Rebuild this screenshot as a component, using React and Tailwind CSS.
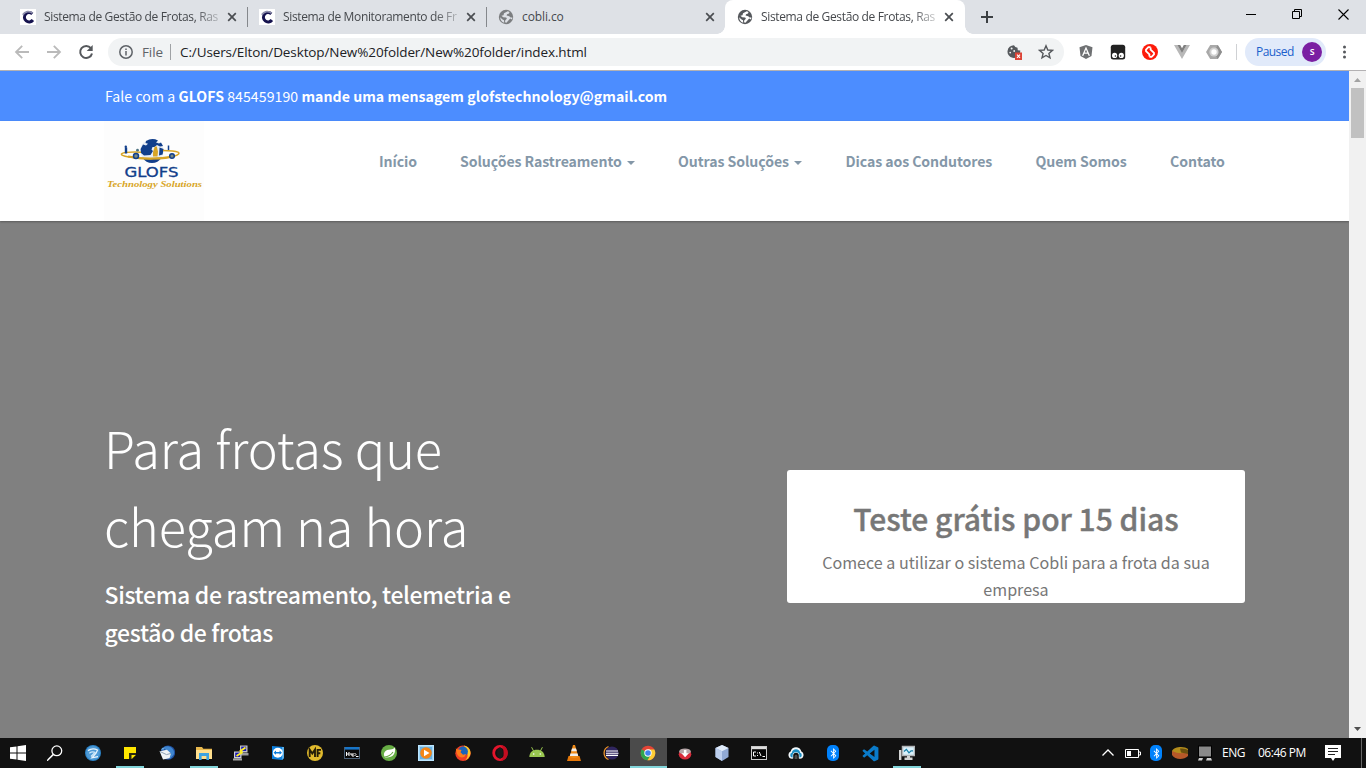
import React from "react";
import { FaAngular, FaBluetoothB } from "react-icons/fa";
import { BiLogoVisualStudio } from "react-icons/bi";

const Svg = ({ s = 16, className = "", children, box = 16 }) => (
  <svg width={s} height={s} viewBox={`0 0 ${box} ${box}`} fill="none" className={`shrink-0 ${className}`}>
    {children}
  </svg>
);

const CobliIcon = () => (
  <Svg>
    <rect width="16" height="16" fill="#fff" />
    <path d="M12.3 4.8A4.7 4.7 0 1 0 12.9 11" stroke="#16134f" strokeWidth="3" />
    <path d="M2.8 5.8C5 2.3 9.5 1.6 12.5 4" stroke="#8f90ad" strokeWidth="1.8" />
  </Svg>
);

const GlobeIcon = ({ color, bg }) => (
  <Svg>
    <circle cx="8" cy="8" r="7.2" fill={color} />
    <path d="M9.8 2.3 11.5 3.1 11 4.6 9 5.2 8.6 6.4 11.2 7.2 12.6 8.6H14.4L14 10.4 12.2 9.4 10.6 11.2 8.4 13.8 7 13.2 7.3 11.2 8.9 9.8 8.2 8.6 5.2 8.3 3.4 6.8 5.5 6.2 6 4.2Z" fill={bg} />
    <path d="M2.2 8.2 4.2 10.2 6 11.2 6.2 13.8Q2.4 12.6 2.2 8.2Z" fill={bg} />
  </Svg>
);

const CloseX = () => (
  <Svg s={10} box={10} className="text-[#4a4d51]">
    <path d="M1.2 1.2 8.8 8.8M8.8 1.2 1.2 8.8" stroke="currentColor" strokeWidth="1.7" />
  </Svg>
);

const tabs = [
  { title: "Sistema de Gestão de Frotas, Ras", icon: <CobliIcon />, fade: true },
  { title: "Sistema de Monitoramento de Fr", icon: <CobliIcon />, fade: true },
  { title: "cobli.co", icon: <GlobeIcon color="#7c7e80" bg="#dee1e6" /> },
  { title: "Sistema de Gestão de Frotas, Ras", icon: <GlobeIcon color="#55585c" bg="#fff" />, active: true, fade: true },
];

function TabStrip() {
  return (
    <div className="flex h-[34px] shrink-0 bg-[#dee1e6] pl-[8px]">
      {tabs.map((t, i) => (
        <div
          key={i}
          className={`relative flex h-[34px] shrink-0 items-center pr-[10px] pl-[12px] ${t.active ? "w-[240px] rounded-t-lg bg-white" : "w-[239px]"}`}
        >
          {t.icon}
          <span
            className={`ml-[8px] w-[175px] font-['Open_Sans','Noto_Sans',sans-serif] text-[12px] whitespace-nowrap text-[#45484c] ${t.fade ? "tracking-[-0.35px] [mask-image:linear-gradient(to_right,#000_86%,rgba(0,0,0,0.25)_100%)]" : "tracking-[-0.1px]"}`}
          >
            {t.title}
          </span>
          <span className="ml-[8px] flex">
            <CloseX />
          </span>
          {i < 2 && <span className="absolute top-[7px] -right-px h-[20px] w-px bg-[#85888c]" />}
          {t.active && (
            <>
              <span className="absolute bottom-0 -left-[8px] h-[8px] w-[8px] bg-[radial-gradient(circle_at_0_0,#dee1e6_7.5px,#fff_8px)]" />
              <span className="absolute -right-[8px] bottom-0 h-[8px] w-[8px] bg-[radial-gradient(circle_at_100%_0,#dee1e6_7.5px,#fff_8px)]" />
            </>
          )}
        </div>
      ))}
      <div className="ml-[15px] flex items-center">
        <Svg s={14} box={14}>
          <path d="M7 1V13M1 7H13" stroke="#3c4043" strokeWidth="2" />
        </Svg>
      </div>
      <div className="ml-auto flex h-[28px] items-center">
        <span className="flex w-[46px] justify-center">
          <Svg s={10} box={10}>
            <path d="M0 5.5H10" stroke="#000" />
          </Svg>
        </span>
        <span className="flex w-[46px] justify-center">
          <Svg s={10} box={10}>
            <path d="M.5 2.5H7.5V9.5H.5ZM2.5 2.5V.5H9.5V7.5H7.5" stroke="#000" />
          </Svg>
        </span>
        <span className="flex w-[46px] justify-center">
          <Svg s={11} box={11}>
            <path d="M.5.5 10.5 10.5M10.5.5.5 10.5" stroke="#000" strokeWidth="1.1" />
          </Svg>
        </span>
      </div>
    </div>
  );
}

function Toolbar() {
  return (
    <div className="flex h-[37px] shrink-0 items-center border-b border-[#b3b1b3] bg-white pl-[14px] font-['Open_Sans','Noto_Sans',sans-serif]">
      <Svg>
        <path d="M15 8H2M8.2 1.8 2 8 8.2 14.2" stroke="#bababa" strokeWidth="1.8" />
      </Svg>
      <Svg className="ml-[16px]">
        <path d="M1 8H14M7.8 1.8 14 8 7.8 14.2" stroke="#bababa" strokeWidth="1.8" />
      </Svg>
      <Svg className="ml-[16px]">
        <path d="M12.9 4.2A6 6 0 1 0 14 9.4" stroke="#55585c" strokeWidth="2" />
        <path d="M14.7 1V7H8.7Z" fill="#55585c" />
      </Svg>
      <div className="ml-[14px] flex h-[28px] w-[956px] items-center rounded-full bg-[#f1f3f4] pl-[11px]">
        <Svg s={14} box={14}>
          <circle cx="7" cy="7" r="6.2" stroke="#5f6368" strokeWidth="1.5" />
          <path d="M7 6V10.5M7 3.4V5" stroke="#5f6368" strokeWidth="1.5" />
        </Svg>
        <span className="ml-[9px] w-[28px] pt-px text-[13.5px] tracking-[-0.1px] text-[#5f6368]">File</span>
        <span className="h-[16px] w-px bg-[#9fa2a5]" />
        <span className="ml-[9px] pt-px text-[13.5px] tracking-[-0.11px] whitespace-nowrap text-[#202124]">
          C:/Users/Elton/Desktop/New%20folder/New%20folder/index.html
        </span>
        <Svg className="mr-px ml-auto">
          <path d="M8 1.2A6.4 6.4 0 1 0 14 9.5L14.3 6.5 11.8 6.2 11.5 3.8 9.3 3Z" fill="#55585c" />
          <circle cx="5.6" cy="4.6" r="1" fill="#f1f3f4" />
          <circle cx="8.2" cy="7" r=".9" fill="#f1f3f4" />
          <circle cx="4.2" cy="8.6" r=".9" fill="#f1f3f4" />
          <rect x="9" y="8.5" width="7" height="7.5" fill="#dc4437" />
          <path d="M11 10.7 14 13.8M14 10.7 11 13.8" stroke="#fff" strokeWidth="1.1" />
        </Svg>
        <Svg className="mr-[10px] ml-[15px]">
          <path d="M8 1.8 9.8 6 14.4 6.4 10.9 9.4 12 13.9 8 11.5 4 13.9 5.1 9.4 1.6 6.4 6.2 6Z" stroke="#55585c" strokeWidth="1.4" />
        </Svg>
      </div>
      <div className="ml-[14px] flex items-center gap-[16px]">
        <FaAngular size={16} className="text-[#6f7173]" />
        <Svg>
          <rect x=".8" y=".8" width="14.4" height="14.6" rx="2.5" fill="#222" />
          <circle cx="4.6" cy="11.4" r="2.6" fill="#fff" />
          <circle cx="11.3" cy="11.4" r="2.6" fill="#fff" />
          <circle cx="5.4" cy="12" r=".8" fill="#222" />
          <circle cx="10.6" cy="12" r=".8" fill="#222" />
        </Svg>
        <Svg>
          <circle cx="8" cy="8" r="8" fill="#fd1b0a" />
          <path d="M8.6 3.2H6.4L4 5.6V7.2L7.4 10.4V12.6" stroke="#fff" strokeWidth="1.8" />
          <path d="M7.4 12.8H9.6L12 10.4V8.8L8.6 5.6V3.4" stroke="#fff" strokeWidth="1.8" />
        </Svg>
        <Svg>
          <path d="M0 1H3.5L8 8.8 12.5 1H16L8 15Z" fill="#b8b8b8" />
          <path d="M3.4 1H6.2L8 4.2 9.8 1H12.6L8 9.1Z" fill="#7f7f7f" />
        </Svg>
        <Svg>
          <path d="M4.2 1H11.8L16 8 11.8 15H4.2L0 8Z" fill="#a9a9a9" />
          <path d="M11.8 1 16 8 11.8 15 8 8Z" fill="#8e8e8e" />
          <circle cx="8" cy="8" r="4.6" fill="#d1d1d1" />
          <circle cx="8" cy="8" r="2.7" fill="#fff" />
        </Svg>
      </div>
      <span className="ml-[14px] h-[16px] w-px bg-[#cfd1d4]" />
      <div className="ml-[8px] flex h-[28px] w-[81px] items-center justify-between rounded-full bg-[#e1eafa] pr-[4px] pl-[11px] text-[12px] tracking-[-0.55px] text-[#1a5fcc]">
        Paused
        <span className="flex h-[20px] w-[20px] items-center justify-center rounded-full bg-[#7a1fa2] pb-px text-[10px] font-semibold text-white">s</span>
      </div>
      <Svg className="ml-[10px]">
        <circle cx="8.5" cy="3" r="1.5" fill="#55585c" />
        <circle cx="8.5" cy="8" r="1.5" fill="#55585c" />
        <circle cx="8.5" cy="13" r="1.5" fill="#55585c" />
      </Svg>
    </div>
  );
}

const Logo = () => (
  <svg width="100" height="100" viewBox="0 0 100 100" className="shrink-0">
    <rect width="100" height="100" fill="#fdfdfd" />
    <circle cx="48" cy="29.8" r="11.6" fill="#e9eef6" />
    <path d="M42 20Q48 16.5 54 19.5L52 21.5 55 22.5 57 21.5 59 25 56 25.5 53 24 50.5 26 48.5 26 47.5 28.5 49 30 46.5 34 40 34.5 37 32 36.6 28 39 23.5 42 24.5 44 22.8 41.5 22Z" fill="#123f8b" />
    <path d="M55.5 26.5 59.6 28 58.6 33.5 55 34.5Z" fill="#123f8b" />
    <path d="M38.5 36.8Q48 38.6 57.5 36.8 54 42 48 42T38.5 36.8Z" fill="#123f8b" />
    <path d="M37 31.2C14 30.5 13 34 25 36 40 38.8 60 38.4 70 35.2 80 32 74 29.5 59 29.5" fill="none" stroke="#d8a526" strokeWidth="1.5" />
    <path d="M24 35.6Q46 39.5 70 35.4" fill="none" stroke="#d8a526" strokeWidth="2" />
    <path d="M49 31 50.8 25.5H52.8L54 30.5 53.5 35.5H49Z" fill="#d8a526" />
    <circle cx="32" cy="35" r="2.5" fill="#7d8a80" stroke="#123f8b" strokeWidth="1.5" />
    <circle cx="68" cy="35" r="2.3" fill="#7d8a80" stroke="#123f8b" strokeWidth="1.5" />
    <path d="M22 26.5V32.5" stroke="#123f8b" strokeWidth="2.4" />
    <circle cx="21.8" cy="25.8" r="1.2" fill="#123f8b" />
    <path d="M64.5 24.5V29" stroke="#123f8b" strokeWidth="1.5" />
    <circle cx="33.5" cy="29.2" r="1.4" fill="#4b7180" />
    <text x="20.5" y="56.3" fontFamily="DejaVu Sans" fontSize="13.2" textLength="54" lengthAdjust="spacingAndGlyphs" fill="#123f8b" stroke="#123f8b" strokeWidth=".3">GLOFS</text>
    <text x="3" y="65.7" fontFamily="Liberation Serif" fontStyle="italic" fontWeight="bold" fontSize="9" textLength="95" lengthAdjust="spacingAndGlyphs" fill="#d8a526">Technology Solutions</text>
  </svg>
);

const Caret = () => <span className="mt-[2px] ml-[5px] border-x-4 border-t-4 border-x-transparent border-t-[#8497a8]" />;

function Page() {
  return (
    <main className="flex min-w-0 flex-1 flex-col bg-[#808080] font-['Noto_Sans_CJK_SC',sans-serif]">
      <div className="flex h-[50px] shrink-0 items-center bg-[#4c8dff] pt-[2px] pl-[105px]">
        <p className="text-[14.1px] tracking-[0.06px] whitespace-nowrap text-white">
          Fale com a <b className="font-bold">GLOFS</b> 845459190 <b className="font-bold">mande uma mensagem glofstechnology@gmail.com</b>
        </p>
      </div>
      <header className="flex h-[100px] shrink-0 bg-white pl-[104px] shadow-[0_1px_2px_rgba(0,0,0,0.3)]">
        <Logo />
        <nav className="mt-[29px] ml-[175px] flex h-[24px] text-[14.1px] font-bold tracking-[-0.07px] whitespace-nowrap text-[#8497a8]">
          <a className="flex w-[81px] items-center">Início</a>
          <a className="flex w-[218px] items-center">Soluções Rastreamento<Caret /></a>
          <a className="flex w-[167.5px] items-center">Outras Soluções<Caret /></a>
          <a className="flex w-[190px] items-center">Dicas aos Condutores</a>
          <a className="flex w-[134.5px] items-center">Quem Somos</a>
          <a className="flex items-center">Contato</a>
        </nav>
      </header>
      <section className="flex min-h-0 flex-1 items-start justify-between pr-[104px] pl-[105px]">
        <div className="mt-[187px] text-white">
          <h1 className="-ml-px text-[50.5px] leading-[78px] font-light tracking-[-0.08px] whitespace-nowrap">
            Para frotas que
            <br />
            chegam na hora
          </h1>
          <h2 className="mt-[11px] -ml-[0.5px] text-[23px] leading-[38px] font-medium tracking-[-0.34px] whitespace-nowrap">
            Sistema de rastreamento, telemetria e
            <br />
            gestão de frotas
          </h2>
        </div>
        <div className="mt-[249px] h-[133px] w-[458px] rounded-[3px] bg-white text-center whitespace-nowrap text-[#777]">
          <h3 className="mt-[27px] text-[30px] leading-[43px] font-medium [-webkit-text-stroke:0.4px_#777]">Teste grátis por 15 dias</h3>
          <p className="mt-[9px] text-[16.1px] leading-[27px]">
            Comece a utilizar o sistema Cobli para a frota da sua
            <br />
            empresa
          </p>
        </div>
      </section>
    </main>
  );
}

function Scrollbar() {
  return (
    <div className="flex w-[17px] shrink-0 flex-col items-center bg-[#f1f1f1]">
      <Svg s={17} box={17}>
        <path d="M5 11 8.5 7 12 11Z" fill="#a3a3a3" />
      </Svg>
      <div className="h-[50px] w-[13px] bg-[#c1c1c1]" />
      <Svg s={17} box={17} className="mt-auto">
        <path d="M5 6 8.5 10 12 6Z" fill="#505050" />
      </Svg>
    </div>
  );
}

const Bluetooth = () => (
  <span className="flex h-[16px] w-[12px] items-center justify-center rounded-[5px] bg-[#0082fc] text-white">
    <FaBluetoothB size={11} />
  </span>
);

const apps = [
  { el: <Svg><circle cx="8" cy="8" r="8" fill="#2c84c9" /><circle cx="8" cy="8" r="6.9" fill="#4e9ad6" /><path d="M3 5.6Q7.5 2.4 12.5 5L11 8.2 7 12.8 13 11.6" stroke="#e9f5fd" strokeWidth="1.3" /><path d="M4.3 8.2Q7.2 6 10 7.4L6 11.5" stroke="#cfe8f9" strokeWidth="1.3" /></Svg> },
  { run: true, el: <Svg><path d="M2 2H14V14H2Z" fill="#ffe600" /><path d="M7 8H14V10L10 14H7Z" fill="#2b2910" /><path d="M9.5 14V10H14Z" fill="#ffe600" /><path d="M14 10V14H10Z" fill="#111" /></Svg> },
  { el: <Svg><circle cx="9" cy="7.6" r="7.2" fill="#1f4f9e" /><path d="M5 2C10-.5 17 4 14.5 10L11 14 7 6Z" fill="#3f86cf" /><path d="M.6 6.2 8 4.8 12 8.5 10.5 13.2 4 14.4Z" fill="#eef1f5" /><path d="M.8 6.4 7.5 9.6 12 8.4" stroke="#8fa1b5" /><path d="M3 3 6 2.4 5 4.5 2 5Z" fill="#66a7e0" /></Svg> },
  { run: true, el: <Svg><path d="M0 2H6L7.3 3.8H16V14H0Z" fill="#e9b94e" /><path d="M0 5H16V14H0Z" fill="#ffdf8d" /><path d="M3 8H13V15H10.4V11H5.6V15H3Z" fill="#3da3e0" /></Svg> },
  { el: <Svg><rect x="7" y=".5" width="7.5" height="7" fill="#c4c4c4" /><rect x="8.2" y="1.6" width="5" height="4.4" fill="#181ab5" /><path d="M7 8H15.5V10.5H7Z" fill="#9b9b9b" /><rect x="1" y="6.5" width="7.5" height="7" fill="#d0d0d0" /><rect x="2.2" y="7.6" width="5" height="4.4" fill="#181ab5" /><path d="M0 13.5H9V15.5H0Z" fill="#a5a5a5" /><path d="M12.5 2.5 7.5 6 8.8 7.6 3.5 11" stroke="#ffed21" strokeWidth="1.9" /></Svg> },
  { el: <Svg><path d="M2 1 14 2V13L12 15 2 14Z" fill="#0d80df" /><path d="M12 2 14 2V13L12 15Z" fill="#58aeea" /><circle cx="7.8" cy="7.7" r="5" fill="#fff" /><path d="M3.5 7.7 6 5.6V7H9.6V5.6L12 7.7 9.6 9.8V8.4H6V9.8Z" fill="#087bdc" /></Svg> },
  { el: <Svg><circle cx="8" cy="8" r="8" fill="#e1ba2d" /><path d="M2.7 12V4.6L5.3 8.6 8 4.6V12M10.6 12V4.9H14M10.6 8.3H13.3" stroke="#241d08" strokeWidth="1.9" /></Svg> },
  { el: <Svg><rect x=".5" y="2.5" width="15" height="11" fill="#0a0a0a" stroke="#4a6076" /><rect x="1" y="2" width="14" height="2.6" fill="#1875c8" /><path d="M2.5 7V11M2.5 9H5M5 7V11M7 8V10H9V8M9 10V12M10.5 8 12 9.5 10.5 11M12 11.5H14.5" stroke="#fff" strokeWidth="1" /></Svg> },
  { el: <Svg><circle cx="8" cy="8" r="8" fill="#67ad45" /><path d="M13.8 2.5C15 9 12 13 4 12.5 1 8 5 4.5 9.5 4.6 11.5 4.4 12.7 3.8 13.8 2.5Z" fill="#fff" /><path d="M3.5 12Q9 11.5 12 7" stroke="#67ad45" strokeWidth="1.1" /></Svg> },
  { el: <Svg><rect x=".5" y=".5" width="15" height="15" fill="#9bd3f5" stroke="#bce5ff" /><path d="M2 2H14V14H2Z" fill="#69afe0" /><circle cx="8" cy="8" r="5.8" fill="#f48617" /><path d="M6 4.7 11.5 8 6 11.3Z" fill="#fff" /></Svg> },
  { el: <Svg><circle cx="8" cy="8.2" r="7.7" fill="#ee3e24" /><path d="M9 .5C17 2 18 12 10 15.5 14 12 13 7 10 5Z" fill="#ffc928" /><circle cx="8" cy="6.4" r="4.9" fill="#1b63b9" /><path d="M.8 3 2 4.6 4 4.6 6.5 5 5.5 7.2 8 9.8 11 9Q10 12.5 6.8 12.5 3 12 1.6 8Z" fill="#ff7b19" /></Svg> },
  { el: <Svg><ellipse cx="8" cy="8" rx="6.3" ry="6.6" stroke="#e5152c" strokeWidth="2.8" /><ellipse cx="8" cy="8" rx="3" ry="5.8" fill="#191919" /><path d="M9 .3C18 1 18 15 9 15.7 12.5 13.5 12.5 3 9 .3Z" fill="#c40d20" /></Svg> },
  { el: <Svg><path d="M.3 12C.3 2.2 15.7 2.2 15.7 12Z" fill="#99c650" /><path d="M2.6 2.2 4.6 6M13.4 2.2 11.4 6" stroke="#99c650" strokeWidth="1" /><circle cx="4.7" cy="9" r=".8" fill="#fff" /><circle cx="11.3" cy="9" r=".8" fill="#fff" /></Svg> },
  { el: <Svg><path d="M2.5 11H13.5L15 16H1Z" fill="#e67809" /><path d="M7 0H9L12.5 12Q8 14 3.5 12Z" fill="#f08a16" /><path d="M6 3.5H10L10.9 6.2H5.2ZM4.5 8.6H11.6L12.2 11H3.8Z" fill="#eee" /></Svg> },
  { el: <Svg><circle cx="9" cy="8" r="6.6" fill="#30265f" /><path d="M5.5 1.5A7 7 0 0 0 5.5 14.5" stroke="#ed962e" strokeWidth="1.3" /><path d="M3 6H15M3 8.2H15.4M3 10.4H15" stroke="#fff" strokeWidth="1.1" /></Svg> },
  { run: true, active: true, el: <Svg><circle cx="8" cy="8" r="7.3" fill="#e44436" /><path d="M8 8 1.7 4.3A7.3 7.3 0 0 0 7.5 15.3L11 9.5Z" fill="#2fa64f" /><path d="M8 4.4H14.3A7.3 7.3 0 0 1 7.5 15.3L11.2 9.5Z" fill="#fccd35" /><circle cx="8" cy="8" r="3.7" fill="#fff" /><circle cx="8" cy="8" r="2.8" fill="#4083ee" /></Svg> },
  { el: <Svg><ellipse cx="8" cy="9.2" rx="6.3" ry="5.2" fill="#d92d3c" /><ellipse cx="8" cy="6.4" rx="5.8" ry="3" fill="#b8a8aa" /><path d="M6.9 5H9.4V8.2H11.8L8.1 12.2 4.5 8.2H6.9Z" fill="#fff" /></Svg> },
  { el: <Svg><path d="M8 0 14.5 3V12L8 16 1.5 12V3Z" fill="#91a9d4" /><path d="M8 0 14.5 3 8 6.2 1.5 3Z" fill="#e0ebfa" /><path d="M1.5 3 8 6.2V16L1.5 12Z" fill="#bdcfee" /></Svg> },
  { el: <Svg><rect x=".5" y="1.5" width="15" height="13" fill="#050505" stroke="#c9c9c9" /><rect x="1" y="2" width="14" height="2.2" fill="#ddd" /><path d="M5 7H2.5V11H5M6.5 7.5V8.5M6.5 10V11M8.3 7 10 11M11.5 11.5H14" stroke="#fff" /></Svg> },
  { el: <Svg><path d="M4 13.8A3.8 3.8 0 0 1 2.6 6.6C3.6.9 12.4.9 13.4 6.6A3.8 3.8 0 0 1 12 13.8L10.8 13.6V10.6A2.8 2.8 0 0 0 5.2 10.6V13.6Z" fill="#f2f8fb" /><path d="M4.6 12.4H4A2.4 2.4 0 0 1 3.9 7.8C4 2.9 12 2.9 12.1 7.8A2.4 2.4 0 0 1 12 12.4H11.4V10.6A3.4 3.4 0 0 0 4.6 10.6Z" fill="#1d8fc4" /><path d="M6.6 14V11.2A1.4 1.4 0 0 1 9.4 11.2V14Z" fill="#4c4c4c" /></Svg> },
  { el: <Bluetooth /> },
  { el: <BiLogoVisualStudio size={19} className="text-[#0a7bc9]" /> },
  { run: true, el: <Svg><rect x="3.5" y="1.5" width="12" height="9" fill="#d9f1fb" stroke="#b2b5b7" strokeWidth="1.5" /><path d="M5 6.5 7.4 4.4 10 7.8 12 5.8H14" stroke="#167ea6" strokeWidth="1.2" /><path d="M0 5H2.4V15H0ZM8 11H11V12.4H13.5V15H5.5V12.4H8Z" fill="#d3d4d4" /></Svg> },
];

function Taskbar() {
  return (
    <footer className="flex h-[30px] shrink-0 items-center bg-[#111] text-white">
      <span className="flex w-[36px] justify-center">
        <Svg>
          <path d="M0 2.3 6.5 1.4V7.5H0ZM7.5 1.2 16 0V7.5H7.5ZM0 8.5H6.5V14.6L0 13.7ZM7.5 8.5H16V16L7.5 14.8Z" fill="#fff" />
        </Svg>
      </span>
      <span className="flex w-[38.5px] justify-center">
        <Svg>
          <circle cx="9.8" cy="5.8" r="4.9" stroke="#fff" strokeWidth="1.3" />
          <path d="M6.4 9.4 0 15.7" stroke="#fff" strokeWidth="1.5" />
        </Svg>
      </span>
      {apps.map((a, i) => (
        <span key={i} className={`relative flex h-[30px] w-[37px] shrink-0 items-center justify-center ${a.active ? "bg-[#4b4b4b]" : ""}`}>
          {a.el}
          {a.run && <span className={`absolute bottom-0 h-[2px] bg-[#82d5da] ${a.active ? "w-full" : "w-[28px]"}`} />}
        </span>
      ))}
      <div className="ml-auto flex items-center font-['Open_Sans','Noto_Sans',sans-serif] text-[12px]">
        <Svg s={12} box={12}>
          <path d="M.5 8.5 6 3 11.5 8.5" stroke="#fff" strokeWidth="1.3" />
        </Svg>
        <Svg className="ml-[11px]">
          <path d="M.5 4.5H13.5V12.5H.5ZM14 7H15.5V10H14" stroke="#fff" />
          <rect x="2" y="6" width="4" height="5" fill="#fff" />
        </Svg>
        <span className="ml-[9px]"><Bluetooth /></span>
        <Svg className="ml-[10px]">
          <path d="M0 6C2 1 13 1 16 4V9Q8 12 0 7Z" fill="#b48d1c" />
          <path d="M0 6Q8 10 16 7V11C12 15 3 15 0 10Z" fill="#b65829" />
          <path d="M8 3.5Q13 3 16 5V9L9 7.5Z" fill="#6a500f" />
        </Svg>
        <Svg className="ml-[9px]">
          <rect x="1.5" y="1" width="13" height="11" fill="#898989" stroke="#000" />
          <path d="M2 13H6L5 15.5H1ZM10 13H14L15 15.5H9Z" fill="#d0d0d0" />
        </Svg>
        <span className="ml-[9px] w-[36px] tracking-[-0.45px]">ENG</span>
        <span className="w-[67px] tracking-[-0.5px] whitespace-nowrap">06:46 PM</span>
        <Svg>
          <path d="M0 0H16V13H10L8 16 6 13H0Z" fill="#fff" />
          <path d="M3 3.5H13M3 6.5H13M3 9.5H10" stroke="#222" />
        </Svg>
        <span className="mr-[4px] ml-[20px] h-[30px] w-px bg-[#666]" />
      </div>
    </footer>
  );
}

export default function App() {
  return (
    <div className="flex h-[768px] w-[1366px] flex-col overflow-hidden">
      <TabStrip />
      <Toolbar />
      <div className="flex min-h-0 flex-1">
        <Page />
        <Scrollbar />
      </div>
      <Taskbar />
    </div>
  );
}
